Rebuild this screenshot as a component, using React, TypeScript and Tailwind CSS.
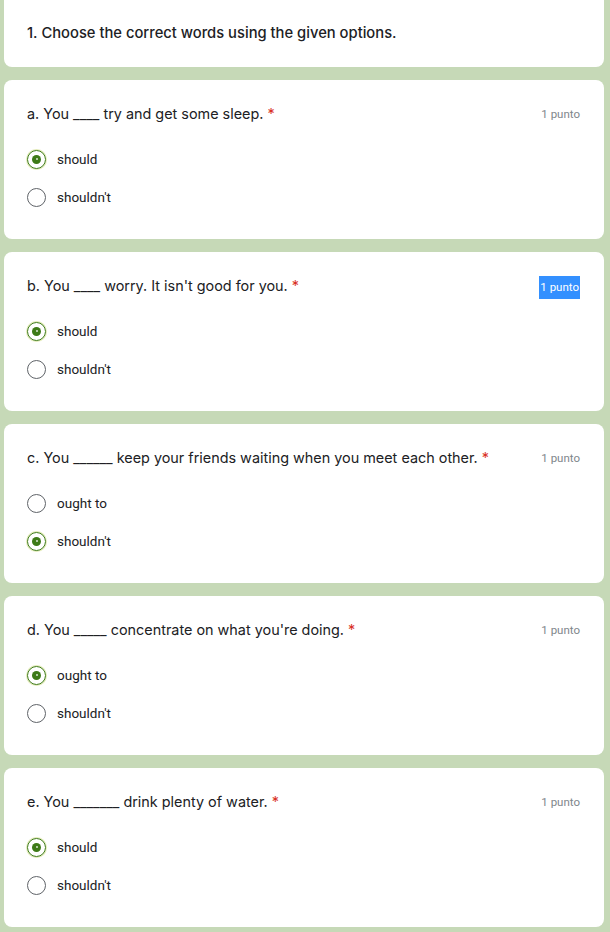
const QUESTIONS = [
  { label: "a. You ____ try and get some sleep.", options: ["should", "shouldn't"], checked: 0 },
  { label: "b. You ____ worry. It isn't good for you.", options: ["should", "shouldn't"], checked: 0, selected: true },
  { label: "c. You ______ keep your friends waiting when you meet each other.", options: ["ought to", "shouldn't"], checked: 1 },
  { label: "d. You _____ concentrate on what you're doing.", options: ["ought to", "shouldn't"], checked: 0 },
  { label: "e. You _______ drink plenty of water.", options: ["should", "shouldn't"], checked: 0 },
];

const TITLE_FONT = { fontFamily: "Inter, Roboto, 'Liberation Sans', sans-serif" };

function Radio({ checked }: { checked: boolean }) {
  if (!checked) {
    return <span className="block h-[19px] w-[19px] rounded-full border-[1.5px] border-[#5f6368]" />;
  }
  return (
    <span className="flex h-[19px] w-[19px] items-center justify-center rounded-full border-[1.5px] border-[#3d7a17] ring-1 ring-[#e3ebb8]">
      <span className="flex h-[9px] w-[9px] items-center justify-center rounded-full bg-[#3d7a17]">
        <span className="h-[2px] w-[2px] rounded-full bg-white/80" />
      </span>
    </span>
  );
}

export default function App() {
  return (
    <div
      className="min-h-[932px] bg-[#c6d9b7] pl-1 pr-1.5 pb-4"
      style={{ fontFamily: "Roboto, 'Liberation Sans', sans-serif" }}
    >
      <div
        className="flex h-[67px] items-center rounded-b-lg bg-white pl-[23px] pr-6 text-[14.75px] font-medium text-[#202124]"
        style={TITLE_FONT}
      >
        1. Choose the correct words using the given options.
      </div>

      {QUESTIONS.map((q) => (
        <div key={q.label} className="mt-[13px] h-[159px] rounded-lg bg-white pl-[23px] pr-6 pt-6">
          <div className="flex h-5 items-center justify-between">
            <div className="text-[14.4px] leading-5 text-[#202124]" style={TITLE_FONT}>
              {q.label} <span className="text-[#d93025]">*</span>
            </div>
            <span
              className={
                q.selected
                  ? "mt-0.5 bg-[#3390ff] px-px py-[4px] text-[11.5px] leading-[15px] text-white"
                  : "mt-0.5 text-[11.5px] text-[#80868b]"
              }
            >
              1 punto
            </span>
          </div>
          <div className="mt-4">
            {q.options.map((opt, i) => (
              <div key={opt} className="flex h-[38px] items-center gap-[11px]">
                <Radio checked={i === q.checked} />
                <span className="text-[13.5px] text-[#202124]">{opt}</span>
              </div>
            ))}
          </div>
        </div>
      ))}
    </div>
  );
}
